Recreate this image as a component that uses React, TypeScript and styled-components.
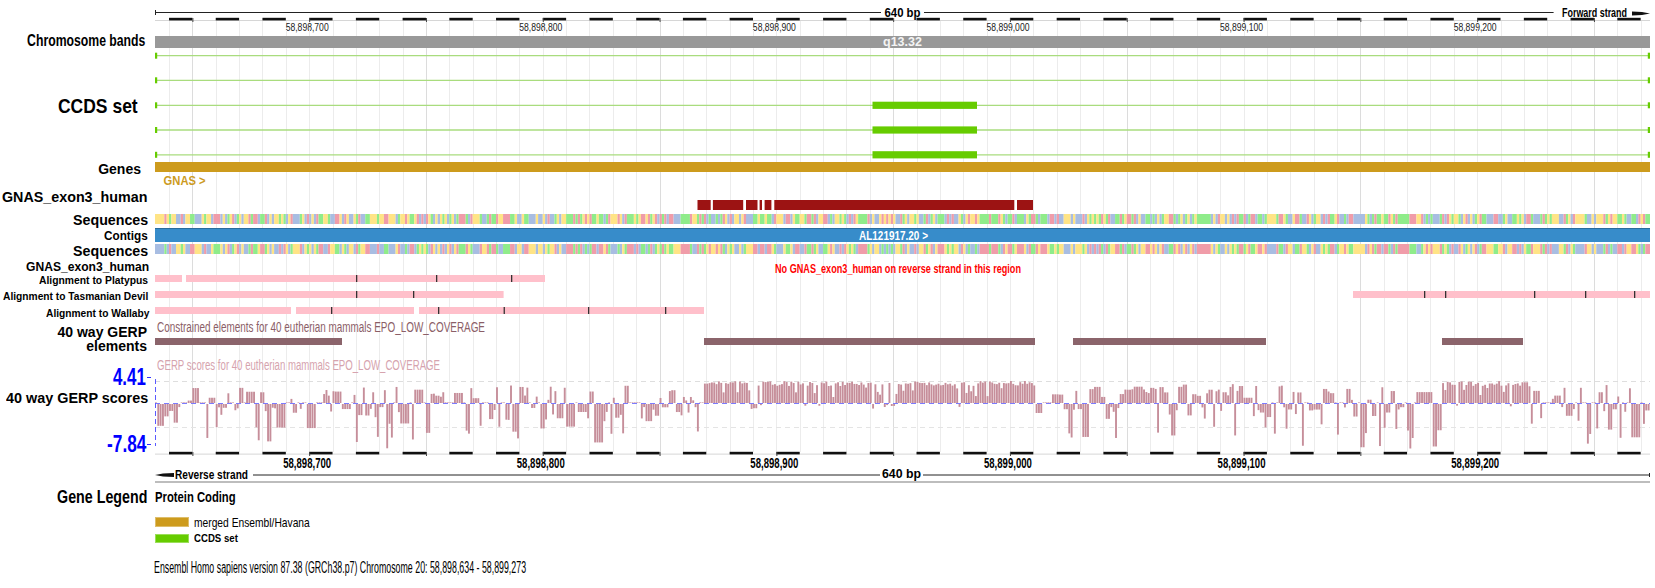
import React, { useLayoutEffect, useRef, useState } from 'react';
import styled, { createGlobalStyle } from 'styled-components';

const TRACK_W = 1495;
const BP = TRACK_W / 640;
const START = 634;
const px = (bp: number) => (bp - START) * BP;

function mulberry(seed: number) {
	return () => {
		seed = (seed + 0x6d2b79f5) | 0;
		let t = Math.imul(seed ^ (seed >>> 15), 1 | seed);
		t = (t + Math.imul(t ^ (t >>> 7), 61 | t)) ^ t;
		return ((t ^ (t >>> 14)) >>> 0) / 4294967296;
	};
}

// sequence data (forward strand + complement)
const seqRand = mulberry(11);
const BASES = Array.from({ length: 640 }, () => 'ACGT'[Math.floor(seqRand() * 4)]);
const COMP: Record<string, string> = { A: 'T', T: 'A', C: 'G', G: 'C' };
const BASE_COLOR: Record<string, string> = {
	A: '#8fec8a',
	C: '#a8bde2',
	G: '#ffe486',
	T: '#f09ca9',
};

// GERP score data, in pixel heights (up = conserved)
const gerpRand = mulberry(42);
const GERP: number[] = [];
for (let i = 0; i < 640; i++) {
	const r = gerpRand();
	const r2 = gerpRand();
	const prev = GERP[i - 1] ?? 0;
	const strong = (i >= 235 && i < 377) || (i >= 551 && i < 586);
	const medium = i >= 393 && i < 476;
	if (r < 0.35 && i > 0 && !strong) {
		GERP.push(prev);
		continue;
	}
	if (strong) {
		if (r < 0.82) GERP.push(17 + r2 * 5);
		else if (r < 0.95) GERP.push(6 + r2 * 10);
		else GERP.push(-(1 + r2 * 4));
	} else if (medium) {
		if (r < 0.72) GERP.push(5 + r2 * 14);
		else GERP.push(-(3 + Math.pow(r2, 1.8) * 34));
	} else {
		if (r < 0.55) GERP.push(2 + r2 * 16);
		else if (r < 0.66) GERP.push(0.6);
		else GERP.push(-(3 + Math.pow(r2, 2) * 42));
	}
}

const GlobalStyle = createGlobalStyle`
	*, *::before, *::after { box-sizing: border-box; }
	html, body { margin: 0; padding: 0; background: #fff; }
	body { font-family: 'Liberation Sans', Arial, sans-serif; color: #000; }
`;

const gridBg = `repeating-linear-gradient(90deg, transparent 0 ${px(650)}px, #dcdcdc ${px(650)}px ${
	px(650) + 1
}px, transparent ${px(650) + 1}px ${BP * 100}px), repeating-linear-gradient(90deg, transparent 0 ${px(
	640
)}px, #ececec ${px(640)}px ${px(640) + 1}px, transparent ${px(640) + 1}px ${BP * 10}px)`;

const Page = styled.div`
	width: 1655px;
	height: 588px;
	overflow: hidden;
	display: flex;
	flex-direction: column;
	background: #fff;
`;

const Row = styled.div<{ $h: number }>`
	display: grid;
	grid-template-columns: 155px 1500px;
	height: ${({ $h }) => $h}px;
`;

const Label = styled.div<{ $size?: number; $pr?: number; $dy?: number; $lh?: number }>`
	display: flex;
	flex-direction: column;
	align-items: flex-end;
	justify-content: center;
	padding-right: ${({ $pr }) => $pr ?? 7}px;
	padding-top: ${({ $dy }) => Math.max(0, ($dy ?? 0) * 2)}px;
	padding-bottom: ${({ $dy }) => Math.max(0, -($dy ?? 0) * 2)}px;
	font-size: ${({ $size }) => $size ?? 12}px;
	font-weight: 700;
	line-height: ${({ $lh }) => ($lh ? `${$lh}px` : 1)};
	white-space: nowrap;
`;

const Track = styled.div<{ $grid?: boolean; $gridFrom?: number }>`
	position: relative;
	background-image: ${({ $grid }) => ($grid === false ? 'none' : gridBg)};
	background-repeat: no-repeat;
	background-position: 0 ${({ $gridFrom }) => $gridFrom ?? 0}px;
	background-size: ${TRACK_W}px calc(100% - ${({ $gridFrom }) => $gridFrom ?? 0}px);

	& > svg {
		display: block;
		overflow: visible;
	}
`;

const Squeeze = styled.span<{ $origin: string }>`
	display: inline-block;
	white-space: nowrap;
	transform-origin: ${({ $origin }) => $origin} center;
`;

function Fit({
	w,
	origin = 'right',
	children,
}: {
	w: number;
	origin?: 'left' | 'right';
	children: React.ReactNode;
}) {
	const ref = useRef<HTMLSpanElement>(null);
	const [k, setK] = useState(1);
	useLayoutEffect(() => {
		const n = ref.current?.offsetWidth;
		if (n) setK(w / n);
	}, [w]);
	return (
		<Squeeze ref={ref} $origin={origin} style={{ transform: `scaleX(${k})` }}>
			{children}
		</Squeeze>
	);
}

const SvgText = styled.text<{ $size: number; $weight?: number }>`
	font-family: 'Liberation Sans', Arial, sans-serif;
	font-size: ${({ $size }) => $size}px;
	font-weight: ${({ $weight }) => $weight ?? 400};
`;

const Value = styled.div`
	display: flex;
	align-items: center;
	color: #0000ff;
	font-size: 23px;
	font-weight: 700;
	line-height: 1;
	margin-right: 5px;

	&::after {
		content: '';
		width: 4px;
		height: 1px;
		margin-left: 1px;
		background: #3030ff;
	}
`;

const Axis = styled.div`
	display: grid;
	grid-template-rows: 14px 22px 18px 30px 16px;
	justify-items: end;
	align-items: center;
	font-weight: 700;
	white-space: nowrap;
`;

const AxisTitle = styled.div`
	font-size: 15px;
	line-height: 1;
	margin-right: 8px;
`;

const Legend = styled.div`
	display: grid;
	grid-template-columns: 155px 1fr;
	height: 65px;
`;

const LegendTitle = styled.div`
	display: flex;
	justify-content: flex-end;
	padding-right: 8px;
	font-size: 19px;
	font-weight: 700;
	line-height: 24px;
`;

const LegendBody = styled.div`
	display: flex;
	flex-direction: column;
`;

const LegendHead = styled.div`
	font-size: 15px;
	font-weight: 700;
	line-height: 24px;
`;

const LegendItem = styled.div<{ $mt: number; $h: number; $size: number; $bold?: boolean }>`
	display: flex;
	align-items: center;
	gap: 5px;
	height: ${({ $h }) => $h}px;
	margin-top: ${({ $mt }) => $mt}px;
	font-size: ${({ $size }) => $size}px;
	font-weight: ${({ $bold }) => ($bold ? 700 : 400)};
	line-height: 1;
`;

const Swatch = styled.span<{ $color: string }>`
	width: 34px;
	height: 100%;
	background: ${({ $color }) => $color};
	border: 1px solid rgba(255, 255, 255, 0.35);
`;

const Footer = styled.div`
	margin-top: 8px;
	padding-left: 154px;
	font-size: 16px;
	line-height: 20px;
	white-space: nowrap;
`;

const fmt = (bp: number) => (58898000 + bp).toLocaleString('en-US');
const DASHES = Array.from({ length: 32 }, (_, i) => 640 + i * 20);
const TICKS = Array.from({ length: 13 }, (_, i) => 650 + i * 50);
const LABELS = [700, 800, 900, 1000, 1100, 1200];

function TopRuler() {
	return (
		<svg width={1500} height={30}>
			<line x1={0} x2={726} y1={12.5} y2={12.5} stroke="#222" />
			<line x1={769} x2={1398.6} y1={12.5} y2={12.5} stroke="#222" />
			<line x1={0.5} x2={0.5} y1={10} y2={15} stroke="#222" />
			<SvgText $size={13} $weight={700} x={747.5} y={16.5} textAnchor="middle" textLength={36} lengthAdjust="spacingAndGlyphs">
				640 bp
			</SvgText>
			<SvgText $size={12} $weight={700} x={1407} y={16.5} textLength={65} lengthAdjust="spacingAndGlyphs">
				Forward strand
			</SvgText>
			<polygon points="1477,11.5 1487,12 1495,13.5 1487,15 1477,15.5" fill="#111" />
			<rect x={0} y={20} width={TRACK_W} height={1} fill="#d6d6d6" />
			{DASHES.map((bp) => (
				<rect key={bp} x={px(bp)} y={17.8} width={BP * 10} height={2.6} fill="#111" />
			))}
			{TICKS.map((bp) => (
				<line key={bp} x1={px(bp) + 0.5} x2={px(bp) + 0.5} y1={18} y2={22} stroke="#444" />
			))}
			{LABELS.map((bp) => (
				<SvgText key={bp} $size={10} x={px(bp) - 2} y={30.5} textAnchor="middle" textLength={43} lengthAdjust="spacingAndGlyphs" fill="#222">
					{fmt(bp)}
				</SvgText>
			))}
		</svg>
	);
}

function BottomRuler() {
	return (
		<svg width={1500} height={35}>
			<rect x={0} y={3.6} width={TRACK_W} height={1} fill="#d6d6d6" />
			{DASHES.map((bp) => (
				<rect key={bp} x={px(bp)} y={1.8} width={BP * 10} height={2.6} fill="#111" />
			))}
			{TICKS.map((bp) => (
				<line key={bp} x1={px(bp) + 0.5} x2={px(bp) + 0.5} y1={2} y2={6} stroke="#444" />
			))}
			{LABELS.map((bp) => (
				<SvgText key={bp} $size={14} $weight={700} x={px(bp) - 2} y={18} textAnchor="middle" textLength={48} lengthAdjust="spacingAndGlyphs">
					{fmt(bp)}
				</SvgText>
			))}
			<polygon points="0,25 8,23.5 19,23 19,27 8,26.5" fill="#111" />
			<SvgText $size={12} $weight={700} x={20} y={29} textLength={73} lengthAdjust="spacingAndGlyphs">
				Reverse strand
			</SvgText>
			<line x1={98} x2={725} y1={25} y2={25} stroke="#222" />
			<line x1={768} x2={1495} y1={25} y2={25} stroke="#222" />
			<line x1={1494.5} x2={1494.5} y1={23} y2={27} stroke="#222" />
			<SvgText $size={13} $weight={700} x={746.5} y={28} textAnchor="middle" textLength={39} lengthAdjust="spacingAndGlyphs">
				640 bp
			</SvgText>
			<rect x={0} y={31} width={TRACK_W} height={2} fill="#bdbdbd" />
		</svg>
	);
}

function Sequence({ y, complement }: { y: number; complement?: boolean }) {
	const runs: { start: number; len: number; base: string }[] = [];
	BASES.forEach((b, i) => {
		const base = complement ? COMP[b] : b;
		const last = runs[runs.length - 1];
		if (last && last.base === base) last.len++;
		else runs.push({ start: i, len: 1, base });
	});
	return (
		<>
			{runs.map((r) => (
				<rect key={r.start} x={r.start * BP} y={y} width={r.len * BP} height={10} fill={BASE_COLOR[r.base]} />
			))}
		</>
	);
}

const CCDS_LINES = [5.7, 30.3, 55.3, 80, 104.8];
const EXONS: [number, number][] = [
	[542.5, 555.7],
	[557.9, 588.2],
	[591, 602.5],
	[604.6, 607],
	[609.6, 616.4],
	[619.3, 859.3],
	[862, 878],
];
const GERP_ELEMENTS: [number, number][] = [
	[0, 187],
	[549, 880],
	[918, 1111],
	[1287, 1368],
];
const ALIGNMENTS = [
	{ name: 'Alignment to Platypus', w: 109, pr: 7, h: 14, dy: 0, y: 2, segs: [[0, 27], [31, 390]], ticks: [201, 281, 356] },
	{
		name: 'Alignment to Tasmanian Devil',
		w: 145,
		pr: 7,
		h: 17,
		dy: 1,
		y: 4,
		segs: [[0, 348.6], [1198, 1495]],
		ticks: [201, 258, 1269, 1290, 1379, 1430, 1479],
	},
	{
		name: 'Alignment to Wallaby',
		w: 103,
		pr: 6,
		h: 16,
		dy: 1,
		y: 3,
		segs: [[0, 136], [141, 259], [264, 549]],
		ticks: [176, 283, 348.6, 433, 510],
	},
];

function GerpChart() {
	const zero = 51;
	return (
		<svg width={1500} height={98}>
			<SvgText $size={14} x={2} y={18} fill="#d6a3ae" textLength={283} lengthAdjust="spacingAndGlyphs">
				GERP scores for 40 eutherian mammals EPO_LOW_COVERAGE
			</SvgText>
			<line x1={0} x2={TRACK_W} y1={29.5} y2={29.5} stroke="#dedede" strokeDasharray="5 4" />
			<line x1={0} x2={TRACK_W} y1={75.5} y2={75.5} stroke="#e4e4e4" strokeDasharray="5 4" />
			{GERP.map((v, i) =>
				v >= 0 ? (
					<rect key={i} x={i * BP} y={zero - v} width={BP - 0.45} height={v} fill="#c68e9a" />
				) : (
					<rect key={i} x={i * BP} y={zero + 1} width={BP - 0.45} height={-v} fill="#c68e9a" />
				)
			)}
			<line x1={0} x2={TRACK_W} y1={zero + 0.5} y2={zero + 0.5} stroke="#7b7bff" strokeDasharray="5 4" />
			<line x1={0.5} x2={0.5} y1={27} y2={94} stroke="#5b5bff" strokeDasharray="5 3" />
		</svg>
	);
}

export default function App() {
	return (
		<>
			<GlobalStyle />
			<Page>
				<Row $h={30}>
					<Label />
					<Track $gridFrom={21}>
						<TopRuler />
					</Track>
				</Row>

				<Row $h={20}>
					<Label $size={17} $pr={10}>
						<Fit w={118}>Chromosome bands</Fit>
					</Label>
					<Track>
						<svg width={1500} height={20}>
							<rect x={0} y={6} width={TRACK_W} height={12} fill="#999" />
							<SvgText $size={13} $weight={700} x={747.5} y={16} textAnchor="middle" fill="#f4f4f4" textLength={39} lengthAdjust="spacingAndGlyphs">
								q13.32
							</SvgText>
						</svg>
					</Track>
				</Row>

				<Row $h={110}>
					<Label $size={21} $pr={17}>
						<Fit w={80}>CCDS set</Fit>
					</Label>
					<Track>
						<svg width={1500} height={110}>
							{CCDS_LINES.map((y, i) => (
								<g key={y}>
									<line x1={0} x2={TRACK_W} y1={y} y2={y} stroke="#a9dc7e" strokeWidth={1.3} />
									<rect x={0} y={y - 3} width={2.2} height={6} fill="#66cc00" />
									<rect x={TRACK_W - 2.2} y={y - 3} width={2.2} height={6} fill="#66cc00" />
									{i >= 2 && <rect x={717.5} y={y - 3.6} width={104.5} height={7.2} fill="#66cc00" />}
								</g>
							))}
						</svg>
					</Track>
				</Row>

				<Row $h={26}>
					<Label $size={14} $pr={14} $dy={-4}>
						<Fit w={43}>Genes</Fit>
					</Label>
					<Track>
						<svg width={1500} height={26}>
							<rect x={0} y={2} width={TRACK_W} height={10} fill="#cd9b1d" />
							<SvgText $size={12} $weight={700} x={8.6} y={24.5} fill="#cd9b1d" textLength={42} lengthAdjust="spacingAndGlyphs">
								GNAS &gt;
							</SvgText>
						</svg>
					</Track>
				</Row>

				<Row $h={26}>
					<Label $size={14} $pr={8} $dy={-2}>
						<Fit w={145}>GNAS_exon3_human</Fit>
					</Label>
					<Track>
						<svg width={1500} height={26}>
							{EXONS.map(([a, b]) => (
								<rect key={a} x={a} y={14} width={b - a} height={10} fill="#9c1313" />
							))}
						</svg>
					</Track>
				</Row>

				<Row $h={15}>
					<Label $size={15} $pr={7}>
						<Fit w={75}>Sequences</Fit>
					</Label>
					<Track>
						<svg width={1500} height={15}>
							<Sequence y={2} />
						</svg>
					</Track>
				</Row>

				<Row $h={16}>
					<Label $size={12} $pr={7} $dy={1}>
						<Fit w={44}>Contigs</Fit>
					</Label>
					<Track>
						<svg width={1500} height={16}>
							<rect x={0} y={1} width={TRACK_W} height={14} fill="#378cca" />
							<rect x={0} y={1} width={TRACK_W} height={1} fill="#2b6c9c" />
							<SvgText $size={13} $weight={700} x={704} y={12.5} fill="#fff" textLength={69} lengthAdjust="spacingAndGlyphs">
								AL121917.20 &gt;
							</SvgText>
						</svg>
					</Track>
				</Row>

				<Row $h={14}>
					<Label $size={15} $pr={7}>
						<Fit w={75}>Sequences</Fit>
					</Label>
					<Track>
						<svg width={1500} height={14}>
							<Sequence y={1} complement />
						</svg>
					</Track>
				</Row>

				<Row $h={16}>
					<Label $size={12} $pr={6} $dy={2}>
						<Fit w={123}>GNAS_exon3_human</Fit>
					</Label>
					<Track>
						<svg width={1500} height={16}>
							<SvgText $size={13} $weight={700} x={620} y={15.5} fill="#ff0000" textLength={246} lengthAdjust="spacingAndGlyphs">
								No GNAS_exon3_human on reverse strand in this region
							</SvgText>
						</svg>
					</Track>
				</Row>

				{ALIGNMENTS.map((al) => (
					<Row $h={al.h} key={al.name}>
						<Label $size={11} $pr={al.pr} $dy={al.dy}>
							<Fit w={al.w}>{al.name}</Fit>
						</Label>
						<Track>
							<svg width={1500} height={al.h}>
								{al.segs.map(([a, b]) => (
									<rect key={a} x={a} y={al.y} width={b - a} height={7} fill="#ffc0cb" />
								))}
								{al.ticks.map((t) => (
									<rect key={t} x={t} y={al.y} width={1.3} height={7} fill="#333" />
								))}
							</svg>
						</Track>
					</Row>
				))}

				<Row $h={32}>
					<Label $size={14} $pr={8} $lh={14} $dy={2.5}>
						<Fit w={90}>40 way GERP</Fit>
						<Fit w={61}>elements</Fit>
					</Label>
					<Track>
						<svg width={1500} height={32}>
							<SvgText $size={14} x={2} y={12} fill="#8b5e67" textLength={328} lengthAdjust="spacingAndGlyphs">
								Constrained elements for 40 eutherian mammals EPO_LOW_COVERAGE
							</SvgText>
							{GERP_ELEMENTS.map(([a, b]) => (
								<rect key={a} x={a} y={18} width={b - a} height={7} fill="#8b646b" />
							))}
						</svg>
					</Track>
				</Row>

				<Row $h={98}>
					<Axis>
						<span />
						<Value>
							<Fit w={33}>4.41</Fit>
						</Value>
						<AxisTitle>
							<Fit w={142}>40 way GERP scores</Fit>
						</AxisTitle>
						<span />
						<Value>
							<Fit w={39}>-7.84</Fit>
						</Value>
					</Axis>
					<Track>
						<GerpChart />
					</Track>
				</Row>

				<Row $h={35}>
					<Label />
					<Track $grid={false}>
						<BottomRuler />
					</Track>
				</Row>

				<Legend>
					<LegendTitle>
						<Fit w={90}>Gene Legend</Fit>
					</LegendTitle>
					<LegendBody>
						<LegendHead>
							<Fit w={81} origin="left">
								Protein Coding
							</Fit>
						</LegendHead>
						<LegendItem $mt={8} $h={10} $size={13}>
							<Swatch $color="#cd9b1d" />
							<Fit w={116} origin="left">
								merged Ensembl/Havana
							</Fit>
						</LegendItem>
						<LegendItem $mt={7} $h={9} $size={10.5} $bold>
							<Swatch $color="#66cc00" />
							<Fit w={44} origin="left">
								CCDS set
							</Fit>
						</LegendItem>
					</LegendBody>
				</Legend>

				<Footer>
					<Fit w={372} origin="left">
						Ensembl Homo sapiens version 87.38 (GRCh38.p7) Chromosome 20: 58,898,634 - 58,899,273
					</Fit>
				</Footer>
			</Page>
		</>
	);
}
